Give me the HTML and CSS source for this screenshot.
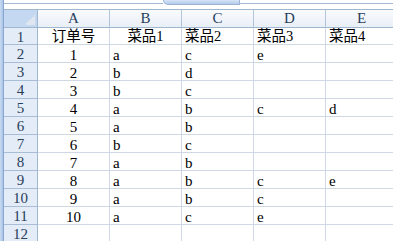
FILE: index.html
```html
<!DOCTYPE html>
<html>

<head>
    <meta charset="UTF-8">
    <title>订单菜品</title>
    <link rel="stylesheet" href="styles.css">
</head>

<body>
    <div class="sheet">
        <div class="frame"></div>
        <div class="main">
            <div class="topbar">
                <div class="namebox"></div>
                <div class="fxtab"></div>
                <div class="formula"></div>
            </div>
            <div class="grid">
                <!-- column headers -->
                <div class="corner"><i></i></div>
                <div class="colhead">A</div>
                <div class="colhead">B</div>
                <div class="colhead">C</div>
                <div class="colhead">D</div>
                <div class="colhead">E</div>

                <div class="rowhead">1</div>
                <div class="cell zh center">订单号</div>
                <div class="cell zh center">菜品1</div>
                <div class="cell zh">菜品2</div>
                <div class="cell zh">菜品3</div>
                <div class="cell zh">菜品4</div>

                <div class="rowhead">2</div>
                <div class="cell center">1</div>
                <div class="cell">a</div>
                <div class="cell">c</div>
                <div class="cell">e</div>
                <div class="cell"></div>

                <div class="rowhead">3</div>
                <div class="cell center">2</div>
                <div class="cell">b</div>
                <div class="cell">d</div>
                <div class="cell"></div>
                <div class="cell"></div>

                <div class="rowhead">4</div>
                <div class="cell center">3</div>
                <div class="cell">b</div>
                <div class="cell">c</div>
                <div class="cell"></div>
                <div class="cell"></div>

                <div class="rowhead">5</div>
                <div class="cell center">4</div>
                <div class="cell">a</div>
                <div class="cell">b</div>
                <div class="cell">c</div>
                <div class="cell">d</div>

                <div class="rowhead">6</div>
                <div class="cell center">5</div>
                <div class="cell">a</div>
                <div class="cell">b</div>
                <div class="cell"></div>
                <div class="cell"></div>

                <div class="rowhead">7</div>
                <div class="cell center">6</div>
                <div class="cell">b</div>
                <div class="cell">c</div>
                <div class="cell"></div>
                <div class="cell"></div>

                <div class="rowhead">8</div>
                <div class="cell center">7</div>
                <div class="cell">a</div>
                <div class="cell">b</div>
                <div class="cell"></div>
                <div class="cell"></div>

                <div class="rowhead">9</div>
                <div class="cell center">8</div>
                <div class="cell">a</div>
                <div class="cell">b</div>
                <div class="cell">c</div>
                <div class="cell">e</div>

                <div class="rowhead">10</div>
                <div class="cell center">9</div>
                <div class="cell">a</div>
                <div class="cell">b</div>
                <div class="cell">c</div>
                <div class="cell"></div>

                <div class="rowhead">11</div>
                <div class="cell center">10</div>
                <div class="cell">a</div>
                <div class="cell">c</div>
                <div class="cell">e</div>
                <div class="cell"></div>

                <div class="rowhead">12</div>
                <div class="cell"></div>
                <div class="cell"></div>
                <div class="cell"></div>
                <div class="cell"></div>
                <div class="cell"></div>
            </div>
        </div>
    </div>
</body>

</html>
```
FILE: styles.css
```css
* {
    margin: 0;
    padding: 0;
    box-sizing: border-box;
}

body {
    width: 393px;
    height: 241px;
    overflow: hidden;
    background-color: #fff;
    font-family: "Liberation Serif", "Noto Sans CJK SC", serif;
    color: #000;
}

.sheet {
    display: flex;
    height: 241px;
}

/* window frame on the left */
.frame {
    width: 4px;
    flex: none;
    background: linear-gradient(to right, #c9dcf3, #a9c3e6);
    border-right: 1px solid #8ca8cf;
}

.main {
    flex: 1;
    overflow: hidden;
}

/* bottom edge of the formula bar */
.topbar {
    height: 9px;
    display: flex;
    align-items: flex-start;
}

.namebox {
    width: 159px;
    height: 4px;
    border-bottom: 1px solid #a4b8d2;
}

.fxtab {
    width: 77px;
    height: 5px;
    background: linear-gradient(#d6e4f6, #b3cbea);
    border: 1px solid #9bb3d4;
    border-top: none;
    border-radius: 0 0 0 6px;
}

.formula {
    flex: 1;
    height: 4px;
    border-bottom: 1px solid #a4b8d2;
}

/* the grid */
.grid {
    display: grid;
    grid-template-columns: 34px repeat(5, 72px);
    grid-template-rows: 19px 17px repeat(11, 18px);
}

.corner {
    background-color: #c5d8f1;
    border-top: 1px solid #9eb6ce;
    border-bottom: 1px solid #9eb6ce;
    border-right: 1px solid #9eb6ce;
    display: flex;
    justify-content: flex-end;
    align-items: flex-end;
    padding: 0 2px 2px 0;
}

.corner i {
    width: 10px;
    height: 10px;
    background: linear-gradient(135deg, transparent 50%, #dfe6ef 50%);
}

.colhead {
    background: linear-gradient(#f9fbfd, #e9eff7);
    border-top: 1px solid #9eb6ce;
    border-bottom: 1px solid #9eb6ce;
    border-right: 1px solid #b3c4da;
    text-align: center;
    font-size: 15px;
    line-height: 17px;
    color: #27405c;
}

.rowhead {
    background-color: #e4ecf7;
    border-right: 1px solid #9eb6ce;
    border-bottom: 1px solid #a9bdd6;
    text-align: center;
    font-size: 15px;
    line-height: 17px;
    padding-top: 1px;
    color: #27405c;
}

.cell {
    border-right: 1px solid #d0d7e5;
    border-bottom: 1px solid #d0d7e5;
    font-size: 15px;
    line-height: 17px;
    padding: 2px 0 0 3px;
    overflow: hidden;
    white-space: nowrap;
}

.cell.center {
    text-align: center;
    padding-left: 0;
}

.cell.zh {
    font-size: 14.5px;
    padding-top: 0;
}
```
